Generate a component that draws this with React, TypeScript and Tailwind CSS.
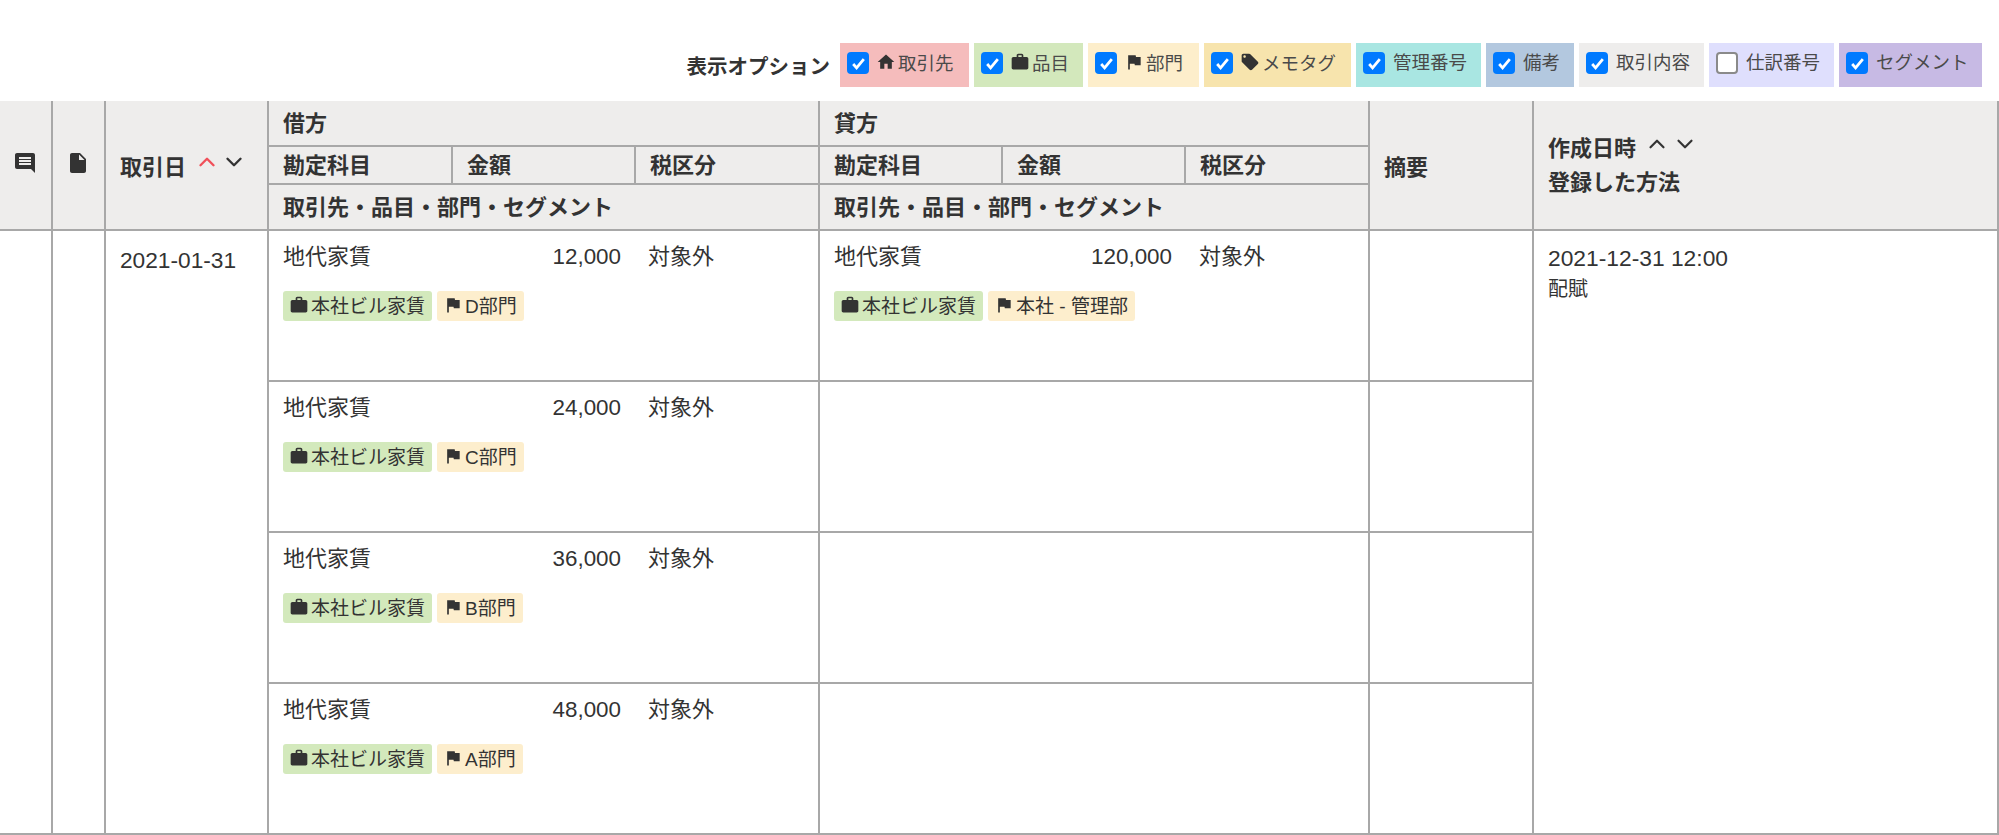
import React, { FC } from "react";
import { ChevronDown, ChevronUp } from "lucide-react";

const PATHS: any = {
  home: "M10 20v-6h4v6h5v-8h3L12 3 2 12h3v8z",
  work: "M20 6h-4V4c0-1.11-.89-2-2-2h-4c-1.11 0-2 .89-2 2v2H4c-1.11 0-1.99.89-1.99 2L2 19c0 1.11.89 2 2 2h16c1.11 0 2-.89 2-2V8c0-1.11-.89-2-2-2zm-6 0h-4V4h4v2z",
  flag: "M14.4 6L14 4H5v17h2v-7h5.6l.4 2h7V6z",
  tag: "M21.41 11.58l-9-9C12.05 2.22 11.55 2 11 2H4c-1.1 0-2 .9-2 2v7c0 .55.22 1.05.59 1.42l9 9c.36.36.86.58 1.41.58.55 0 1.05-.22 1.41-.59l7-7c.37-.36.59-.86.59-1.41 0-.55-.23-1.06-.59-1.42zM5.5 7C4.67 7 4 6.33 4 5.5S4.67 4 5.5 4 7 4.67 7 5.5 6.33 7 5.5 7z",
  file: "M6 2c-1.1 0-1.99.9-1.99 2L4 20c0 1.1.89 2 1.99 2H18c1.1 0 2-.9 2-2V8l-6-6H6zm7 7V3.5L18.5 9H13z",
  comment: "M21.99 4c0-1.1-.89-2-1.99-2H4c-1.1 0-2 .9-2 2v12c0 1.1.9 2 2 2h14l4 4-.01-18zM18 14H6v-2h12v2zm0-3H6V9h12v2zm0-3H6V6h12v2z",
};

const Icon: FC<{ name: string; className?: string }> = ({ name, className }) => (
  <svg viewBox="0 0 24 24" fill="currentColor" className={`shrink-0 text-[#333] ${className || ""}`}>
    <path d={PATHS[name]} />
  </svg>
);

const OPTIONS = [
  { label: "取引先", icon: "home", bg: "bg-[#f5bcbc]", w: "w-[129px]", checked: true },
  { label: "品目", icon: "work", bg: "bg-[#d3e8bc]", w: "w-[109px]", checked: true },
  { label: "部門", icon: "flag", bg: "bg-[#fdeecb]", w: "w-[111px]", checked: true },
  { label: "メモタグ", icon: "tag", bg: "bg-[#f7e4ad]", w: "w-[147px]", checked: true },
  { label: "管理番号", bg: "bg-[#a9e6e2]", w: "w-[125px]", checked: true },
  { label: "備考", bg: "bg-[#b3c8df]", w: "w-[88px]", checked: true },
  { label: "取引内容", bg: "bg-[#eeedec]", w: "w-[125px]", checked: true },
  { label: "仕訳番号", bg: "bg-[#dfdffd]", w: "w-[125px]", checked: false },
  { label: "セグメント", bg: "bg-[#c7bae4]", w: "w-[143px]", checked: true },
];

const ROWS = [
  { amount: "12,000", dept: "D部門", credit: { amount: "120,000", dept: "本社 - 管理部" } },
  { amount: "24,000", dept: "C部門" },
  { amount: "36,000", dept: "B部門" },
  { amount: "48,000", dept: "A部門" },
];

const Check: FC<{ checked: boolean }> = ({ checked }) =>
  checked ? (
    <span className="flex h-[22px] w-[22px] shrink-0 items-center justify-center rounded-[4px] bg-[#007aff]">
      <svg viewBox="0 0 16 16" className="h-[17px] w-[17px]" fill="none" stroke="#fff" strokeWidth="2.6">
        <path d="M3 8.5l3.2 3.6L13 3.8" />
      </svg>
    </span>
  ) : (
    <span className="h-[22px] w-[22px] shrink-0 rounded-[4px] border-2 border-[#8a8a8a] bg-white" />
  );

const Tag: FC<{ icon: string; bg: string; children: React.ReactNode }> = ({ icon, bg, children }) => (
  <span className={`flex h-[30px] items-center gap-[2px] rounded-[3px] pl-[6px] pr-[7px] text-[19px] leading-none ${bg}`}>
    <Icon name={icon} className="mb-[2px] h-[20px] w-[20px]" />
    {children}
  </span>
);

const Entry: FC<{ amount: string; dept: string }> = ({ amount, dept }) => (
  <div>
    <div className="grid grid-cols-[184px_154px_1fr] leading-[30px]">
      <span>地代家賃</span>
      <span className="text-right text-[22.4px]">{amount}</span>
      <span className="pl-[27px]">対象外</span>
    </div>
    <div className="mt-[19px] flex gap-[5px]">
      <Tag icon="work" bg="bg-[#d3e9bc]">本社ビル家賃</Tag>
      <Tag icon="flag" bg="bg-[#fdeecd]">{dept}</Tag>
    </div>
  </div>
);

const App: FC = () => {
  const th = "border-2 border-[#a8a8a8] px-[14px] text-left align-middle font-bold";
  const td = "border-2 border-[#a8a8a8] align-top";

  return (
    <div className="h-[835px] w-[1999px] overflow-hidden bg-white font-['Liberation_Sans','Noto_Sans_CJK_JP',sans-serif] text-[22px] text-[#333]">
      {/* options */}
      <div className="flex h-[101px] items-start justify-end gap-[5px] pr-[17px] pt-[43px]">
        <span className="mr-[5px] text-[20.5px] font-bold leading-[48px]">表示オプション</span>
        {OPTIONS.map((o) => (
          <label key={o.label} className={`flex h-[44px] items-start gap-[8px] pl-[7px] pt-[9px] text-[18.5px] leading-[22px] text-[#4a4a4a] ${o.bg} ${o.w}`}>
            <Check checked={o.checked} />
            <span className="flex items-center gap-[2px]">
              {o.icon && <Icon name={o.icon} className="mb-[4px] -ml-[1px] h-[20px] w-[20px]" />}
              {o.label}
            </span>
          </label>
        ))}
      </div>

      {/* table */}
      <table className="w-[1998px] table-fixed border-collapse [&_tr>*:first-child]:border-l-0 [&_thead_tr:first-child>*]:border-t-0">
        <colgroup>
          <col className="w-[52px]" />
          <col className="w-[53px]" />
          <col className="w-[163px]" />
          <col className="w-[184px]" />
          <col className="w-[183px]" />
          <col className="w-[184px]" />
          <col className="w-[183px]" />
          <col className="w-[183px]" />
          <col className="w-[184px]" />
          <col className="w-[164px]" />
          <col className="w-[465px]" />
        </colgroup>
        <thead className="bg-[#eeedec]">
          <tr className="h-[45px]">
            <th rowSpan={3} className={th}>
              <Icon name="comment" className="mb-[5px] h-[24px] w-[24px] -translate-x-[1px]" />
            </th>
            <th rowSpan={3} className={th}>
              <Icon name="file" className="mb-[4px] h-[24px] w-[24px] -translate-x-[1px]" />
            </th>
            <th rowSpan={3} className={`${th} pt-[4px]`}>
              <div className="flex items-center">
                <span>取引日</span>
                <ChevronUp size={26} strokeWidth={2.2} className="mb-[10px] ml-[8px] text-[#f0505a]" />
                <ChevronDown size={26} strokeWidth={2.2} className="mb-[10px] ml-[1px] text-[#333]" />
              </div>
            </th>
            <th colSpan={3} className={th}>借方</th>
            <th colSpan={3} className={th}>貸方</th>
            <th rowSpan={3} className={`${th} pt-[4px]`}>摘要</th>
            <th rowSpan={3} className={`${th} leading-[32px]`}>
              <div className="flex items-center">
                <span>作成日時</span>
                <ChevronUp size={26} strokeWidth={2} className="mb-[10px] ml-[8px]" />
                <ChevronDown size={26} strokeWidth={2} className="mb-[10px] ml-[2px]" />
              </div>
              <div>登録した方法</div>
            </th>
          </tr>
          <tr className="h-[38px]">
            <th className={th}>勘定科目</th>
            <th className={th}>金額</th>
            <th className={th}>税区分</th>
            <th className={th}>勘定科目</th>
            <th className={th}>金額</th>
            <th className={th}>税区分</th>
          </tr>
          <tr className="h-[46px]">
            <th colSpan={3} className={th}>取引先・品目・部門・セグメント</th>
            <th colSpan={3} className={th}>取引先・品目・部門・セグメント</th>
          </tr>
        </thead>
        <tbody>
          {ROWS.map((row, i) => (
            <tr key={row.dept} className="h-[151px]">
              {i === 0 && (
                <>
                  <td rowSpan={4} className={td} />
                  <td rowSpan={4} className={td} />
                  <td rowSpan={4} className={`${td} px-[14px] pt-[14px] text-[22.7px] leading-[30px]`}>2021-01-31</td>
                </>
              )}
              <td colSpan={3} className={`${td} pl-[14px] pt-[11px]`}>
                <Entry amount={row.amount} dept={row.dept} />
              </td>
              <td colSpan={3} className={`${td} pl-[14px] pt-[11px]`}>
                {row.credit && <Entry amount={row.credit.amount} dept={row.credit.dept} />}
              </td>
              <td className={td} />
              {i === 0 && (
                <td rowSpan={4} className={`${td} px-[14px] pt-[12px] leading-[30px]`}>
                  <div className="text-[22.8px]">2021-12-31 12:00</div>
                  <div className="mt-[1px] text-[20px]">配賦</div>
                </td>
              )}
            </tr>
          ))}
        </tbody>
      </table>
    </div>
  );
};

export default App;
